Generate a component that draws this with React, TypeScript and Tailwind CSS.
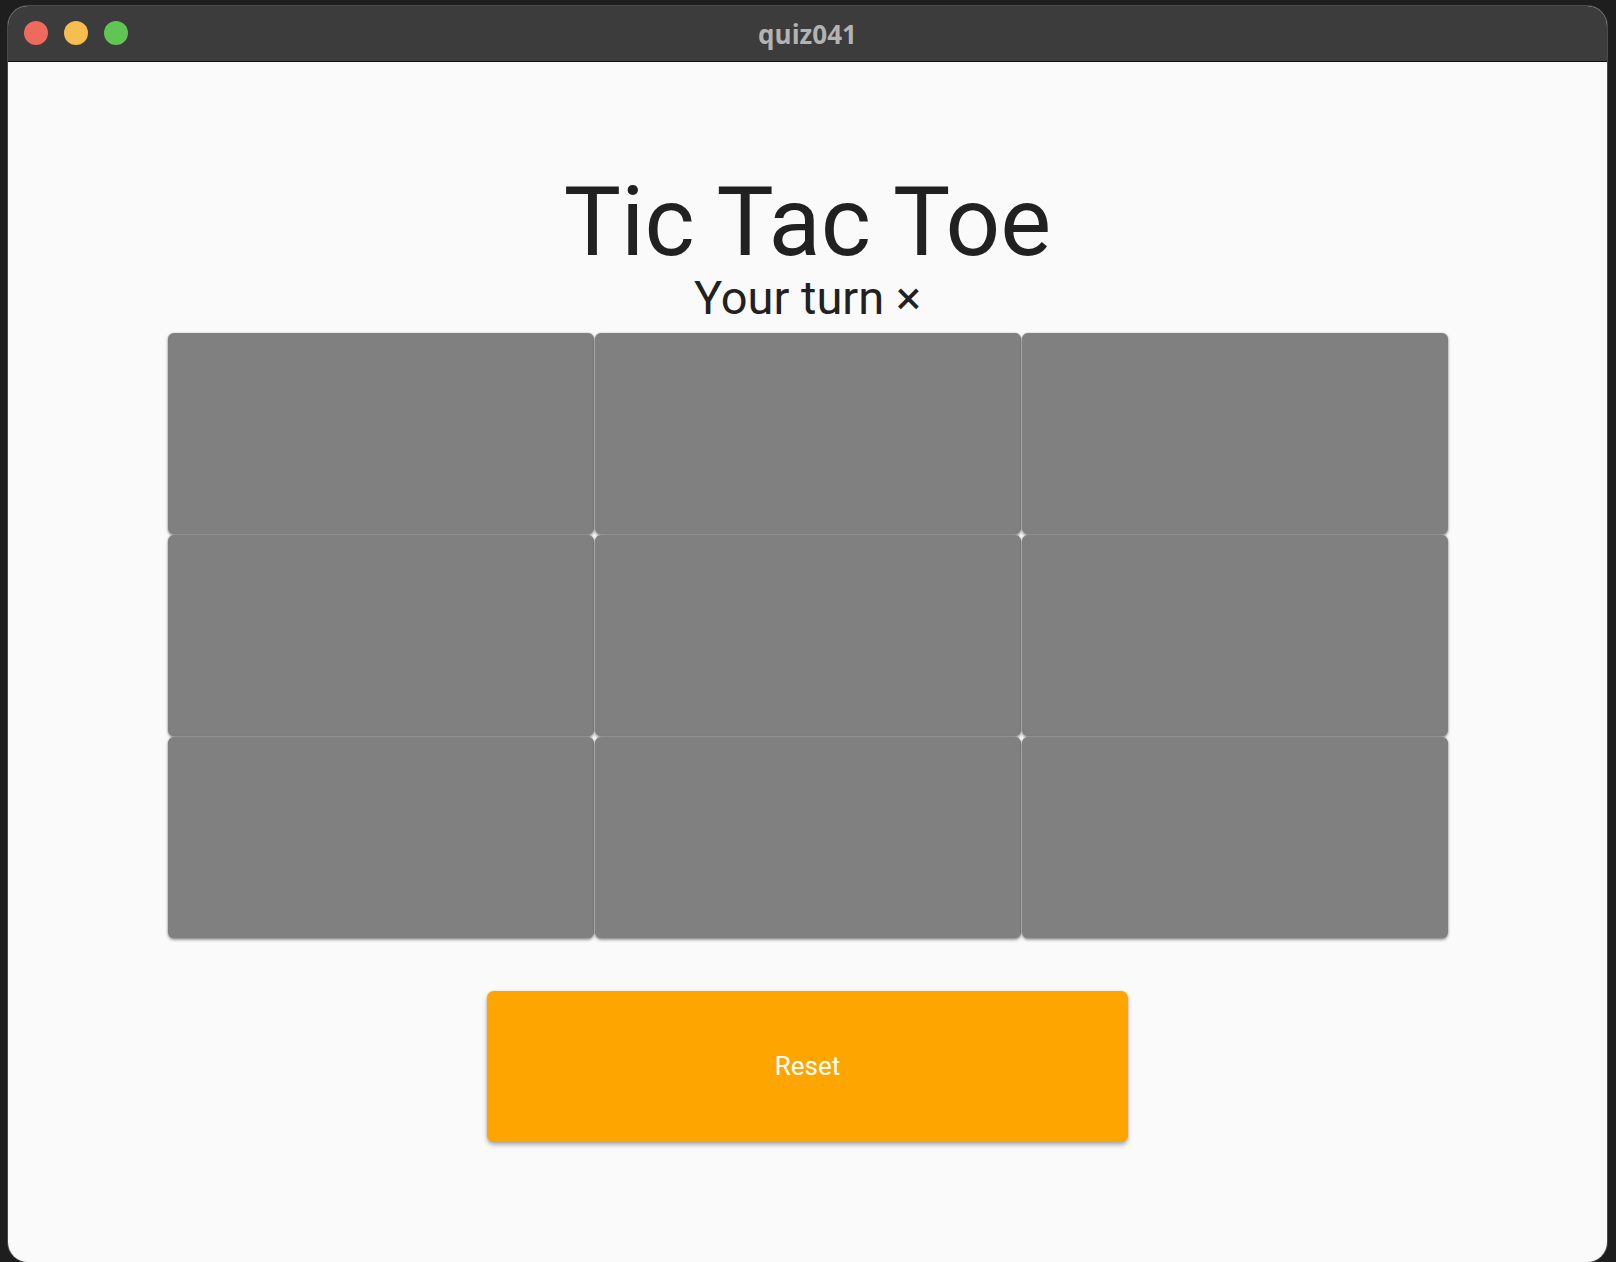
import React from 'react';

const cells = Array.from({ length: 9 });

const App = () => {
  return (
    <div className="w-[1616px] h-[1262px] bg-[#1e1e1e] overflow-hidden pl-[8px] pt-[6px] font-['Roboto',sans-serif]">
      {/* Window */}
      <div className="w-[1599px] h-[1256px] rounded-[20px] overflow-hidden bg-[#fafafa] flex flex-col shadow-[0_0_0_1px_#4a4a4a]">
        {/* Title bar */}
        <div className="relative h-[56px] bg-[#3c3c3c] border-b border-[#111] flex items-center justify-center shrink-0">
          <div className="absolute left-[16px] top-[15px] flex gap-[16px]">
            <span className="w-[24px] h-[24px] rounded-full bg-[#ee6a5f]" />
            <span className="w-[24px] h-[24px] rounded-full bg-[#f5be4f]" />
            <span className="w-[24px] h-[24px] rounded-full bg-[#61c554]" />
          </div>
          <span className="text-[26px] font-bold text-[#b3b3b3] font-['Open_Sans',sans-serif] leading-none">quiz041</span>
        </div>

        {/* Content */}
        <div className="flex-1 flex flex-col items-center pt-[112px]">
          <h1 className="text-[96px] leading-[96px] text-[#212121] font-normal">Tic Tac Toe</h1>
          <p className="text-[47px] leading-[46px] text-[#212121] mt-[5px]">Your turn ×</p>

          <div className="mt-[12px] grid grid-cols-3 gap-[1px] w-[1280px]">
            {cells.map((_, i) => (
              <button
                key={i}
                className="h-[201px] rounded-[6px] bg-[#808080] shadow-[0_2px_3px_rgba(0,0,0,0.38),0_0_2px_rgba(0,0,0,0.25)]"
              />
            ))}
          </div>

          <button className="mt-[53px] w-[641px] h-[151px] rounded-[7px] bg-[#ffa500] text-white text-[26px] shadow-[0_3px_4px_rgba(0,0,0,0.3),0_0_2px_rgba(0,0,0,0.15)]">
            Reset
          </button>
        </div>
      </div>
    </div>
  );
};

export default App;
